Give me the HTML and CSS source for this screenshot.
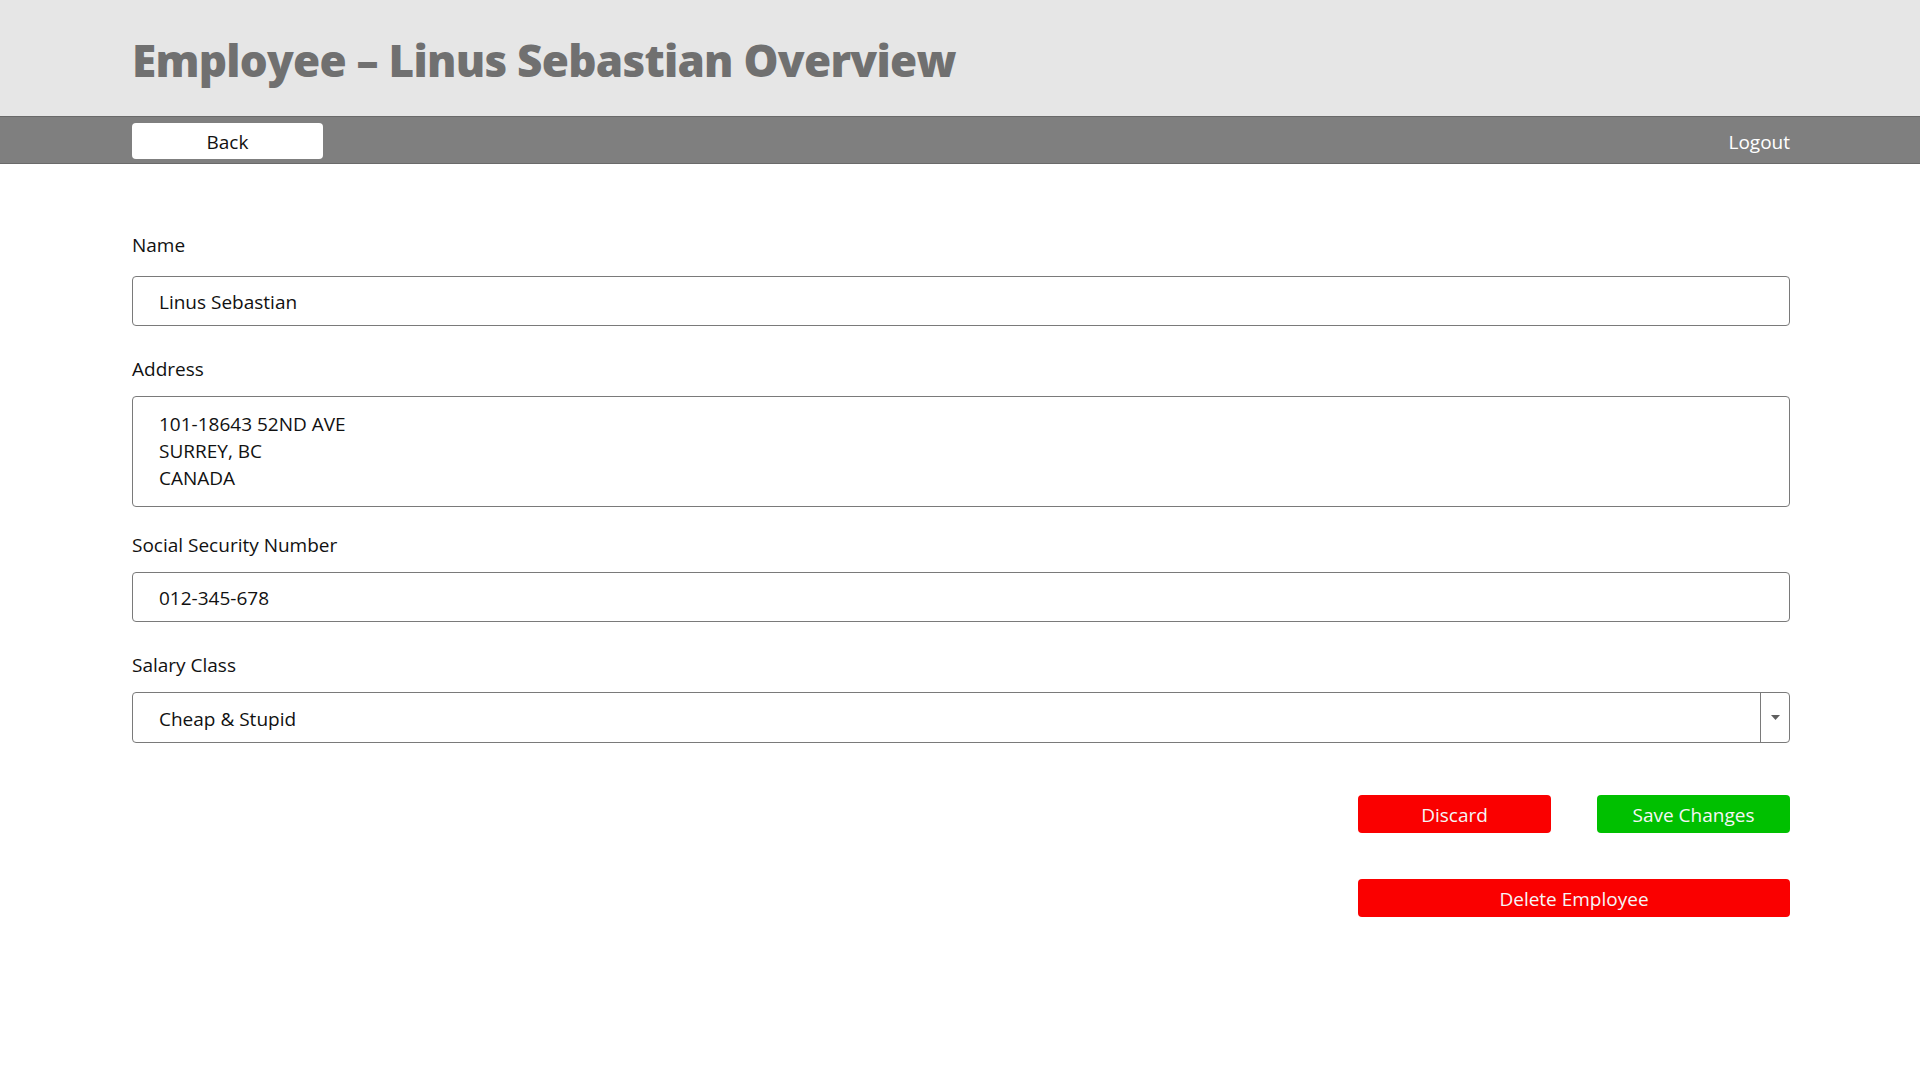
FILE: index.html
```html
<!DOCTYPE html>
<html lang="en">
<head>
<meta charset="utf-8">
<title>Employee – Linus Sebastian Overview</title>
<link rel="stylesheet" href="styles.css">
</head>
<body>
<header class="header">
  <h1 class="title">Employee – Linus Sebastian Overview</h1>
</header>
<nav class="nav">
  <button class="back-btn" type="button">Back</button>
  <a class="logout" href="#">Logout</a>
</nav>
<main class="main">
  <div class="field field-first">
    <label class="label" for="name">Name</label>
    <input class="input" id="name" type="text" value="Linus Sebastian">
  </div>
  <div class="field field-address">
    <label class="label" for="address">Address</label>
    <textarea class="input textarea" id="address">101-18643 52ND AVE
SURREY, BC
CANADA</textarea>
  </div>
  <div class="field">
    <label class="label" for="ssn">Social Security Number</label>
    <input class="input" id="ssn" type="text" value="012-345-678">
  </div>
  <div class="field">
    <span class="label">Salary Class</span>
    <div class="select">
      <span class="select-value">Cheap &amp; Stupid</span>
      <span class="select-btn">
        <svg width="9" height="5" viewBox="0 0 9 5"><path d="M0 0h9L4.5 5z" fill="#5f5f5f"/></svg>
      </span>
    </div>
  </div>
  <div class="actions">
    <div class="action-row">
      <button class="btn btn-red" type="button">Discard</button>
      <button class="btn btn-green" type="button">Save Changes</button>
    </div>
    <button class="btn btn-red btn-wide" type="button">Delete Employee</button>
  </div>
</main>
</body>
</html>
```
FILE: styles.css
```css
* { box-sizing: border-box; }
html, body { margin: 0; padding: 0; }
body {
  background: #ffffff;
  font-family: "Open Sans", "Noto Sans", sans-serif;
  color: #111111;
  width: 1920px;
}
.header {
  height: 116px;
  background: #e6e6e6;
  padding: 33px 0 0 132px;
}
.title {
  margin: 0;
  font-family: "Open Sans", "Noto Sans", sans-serif;
  font-weight: 800;
  font-size: 44px;
  line-height: 54px;
  letter-spacing: -0.75px;
  color: #707070;
}
.nav {
  height: 48px;
  background: #7f7f7f;
  border-top: 1px solid #6a6a6a;
  border-bottom: 1px solid #6a6a6a;
  display: flex;
  align-items: center;
  justify-content: space-between;
  padding: 0 130px 0 132px;
}
.back-btn {
  width: 191px;
  height: 36px;
  background: #ffffff;
  border: none;
  border-radius: 4px;
  font-family: inherit;
  font-size: 19px;
  color: #111;
  padding: 2px 0 0;
  margin-top: 2px;
}
.logout {
  color: #ffffff;
  text-decoration: none;
  font-size: 19px;
  margin-top: 4px;
}
.main {
  padding: 68px 130px 0 132px;
}
.field { margin-bottom: 30px; }
.field-address { margin-bottom: 25px; }
.label {
  display: block;
  font-size: 19px;
  line-height: 27px;
  margin-bottom: 13px;
  color: #111111;
}
.field-first .label { margin-bottom: 17px; }
.input {
  display: block;
  width: 100%;
  height: 50px;
  border: 1px solid #7a7a7a;
  border-radius: 4px;
  padding: 2px 26px 0;
  font-family: inherit;
  font-size: 19px;
  color: #111111;
  background: #fff;
  outline: none;
}
.textarea {
  height: 111px;
  padding: 14px 26px 10px;
  line-height: 27px;
  resize: none;
  overflow: hidden;
}
.select {
  display: flex;
  height: 51px;
  border: 1px solid #7a7a7a;
  border-radius: 4px;
  font-size: 19px;
}
.select-value {
  flex: 1;
  display: flex;
  align-items: center;
  padding: 2px 26px 0;
}
.select-btn {
  width: 29px;
  border-left: 1px solid #7a7a7a;
  display: flex;
  align-items: center;
  justify-content: center;
}
.actions {
  margin-top: 52px;
  display: flex;
  flex-direction: column;
  align-items: flex-end;
  gap: 46px;
}
.action-row {
  width: 432px;
  display: flex;
  justify-content: space-between;
}
.btn {
  width: 193px;
  height: 38px;
  border: none;
  border-radius: 4px;
  font-family: inherit;
  font-size: 19px;
  color: #f6f6f6;
  padding: 2px 0 0;
}
.btn-red { background: #fa0000; }
.btn-green { background: #00c000; }
.btn-wide { width: 432px; }
```
